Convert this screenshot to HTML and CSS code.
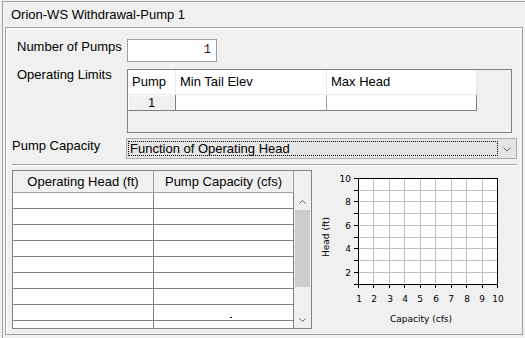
FILE: index.html
```html
<!DOCTYPE html>
<html>
<head>
<meta charset="utf-8">
<link rel="stylesheet" href="styles.css">
</head>
<body>
<div class="window">
  <div class="title">Orion-WS Withdrawal-Pump 1</div>
  <div class="panel">
    <div class="row row-num">
      <div class="lbl lbl-indent">Number of Pumps</div>
      <div class="numbox">1</div>
    </div>
    <div class="row row-limits">
      <div class="lbl lbl-indent">Operating Limits</div>
      <div class="limits">
        <div class="lg">
          <div class="lh">Pump</div>
          <div class="lh">Min Tail Elev</div>
          <div class="lh">Max Head</div>
          <div class="lr-head">1</div>
          <div class="lc"></div>
          <div class="lc lc-last"></div>
        </div>
      </div>
    </div>
    <div class="row row-cap">
      <div class="lbl lbl-cap">Pump Capacity</div>
      <div class="combo">
        <div class="combo-focus">Function of Operating Head</div>
        <svg class="combo-arrow" width="8" height="5" viewBox="0 0 8 5"><polyline points="0.5,0.5 4,4 7.5,0.5" fill="none" stroke="#606060" stroke-width="1"/></svg>
      </div>
    </div>
    <div class="sep"></div>
    <div class="lower">
      <div class="table">
        <div class="thead">
          <div class="th th1">Operating Head (ft)</div>
          <div class="th th2">Pump Capacity (cfs)</div>
          <div class="th-corner"></div>
        </div>
        <div class="tbody">
          <div class="rows">
            <div class="tr"><div class="td td1"></div><div class="td td2"></div></div>
            <div class="tr"><div class="td td1"></div><div class="td td2"></div></div>
            <div class="tr"><div class="td td1"></div><div class="td td2"></div></div>
            <div class="tr"><div class="td td1"></div><div class="td td2"></div></div>
            <div class="tr"><div class="td td1"></div><div class="td td2"></div></div>
            <div class="tr"><div class="td td1"></div><div class="td td2"></div></div>
            <div class="tr"><div class="td td1"></div><div class="td td2"></div></div>
            <div class="tr"><div class="td td1"></div><div class="td td2"><span class="dash"></span></div></div>
            <div class="tr"><div class="td td1"></div><div class="td td2"></div></div>
          </div>
          <div class="vscroll">
            <div class="sb-btn"><svg width="7" height="4" viewBox="0 0 7 4"><polyline points="0.5,3.5 3.5,0.5 6.5,3.5" fill="none" stroke="#606060" stroke-width="1"/></svg></div>
            <div class="sb-thumb"></div>
            <div class="sb-track"></div>
            <div class="sb-btn"><svg width="7" height="4" viewBox="0 0 7 4"><polyline points="0.5,0.5 3.5,3.5 6.5,0.5" fill="none" stroke="#606060" stroke-width="1"/></svg></div>
          </div>
        </div>
      </div>
      <svg class="chart" width="205" height="160" viewBox="0 0 205 160">
        <rect x="46" y="8" width="140" height="107" fill="#fff"/>
        <g stroke="#c0c0c0" stroke-width="1">
          <line x1="61.5" y1="8" x2="61.5" y2="114"/>
          <line x1="77.5" y1="8" x2="77.5" y2="114"/>
          <line x1="92.5" y1="8" x2="92.5" y2="114"/>
          <line x1="108.5" y1="8" x2="108.5" y2="114"/>
          <line x1="123.5" y1="8" x2="123.5" y2="114"/>
          <line x1="139.5" y1="8" x2="139.5" y2="114"/>
          <line x1="154.5" y1="8" x2="154.5" y2="114"/>
          <line x1="170.5" y1="8" x2="170.5" y2="114"/>
          <line x1="46" y1="20.5" x2="185" y2="20.5"/>
          <line x1="46" y1="31.5" x2="185" y2="31.5"/>
          <line x1="46" y1="43.5" x2="185" y2="43.5"/>
          <line x1="46" y1="55.5" x2="185" y2="55.5"/>
          <line x1="46" y1="67.5" x2="185" y2="67.5"/>
          <line x1="46" y1="78.5" x2="185" y2="78.5"/>
          <line x1="46" y1="90.5" x2="185" y2="90.5"/>
          <line x1="46" y1="102.5" x2="185" y2="102.5"/>
        </g>
        <rect x="46.5" y="8.5" width="139" height="106" fill="none" stroke="#000" stroke-width="1"/>
        <g stroke="#000" stroke-width="1">
          <line x1="42" y1="8.5" x2="46" y2="8.5"/>
          <line x1="42" y1="20.5" x2="46" y2="20.5"/>
          <line x1="42" y1="31.5" x2="46" y2="31.5"/>
          <line x1="42" y1="43.5" x2="46" y2="43.5"/>
          <line x1="42" y1="55.5" x2="46" y2="55.5"/>
          <line x1="42" y1="67.5" x2="46" y2="67.5"/>
          <line x1="42" y1="78.5" x2="46" y2="78.5"/>
          <line x1="42" y1="90.5" x2="46" y2="90.5"/>
          <line x1="42" y1="102.5" x2="46" y2="102.5"/>
          <line x1="42" y1="114.5" x2="46" y2="114.5"/>
          <line x1="46.5" y1="115" x2="46.5" y2="118"/>
          <line x1="61.5" y1="115" x2="61.5" y2="118"/>
          <line x1="77.5" y1="115" x2="77.5" y2="118"/>
          <line x1="92.5" y1="115" x2="92.5" y2="118"/>
          <line x1="108.5" y1="115" x2="108.5" y2="118"/>
          <line x1="123.5" y1="115" x2="123.5" y2="118"/>
          <line x1="139.5" y1="115" x2="139.5" y2="118"/>
          <line x1="154.5" y1="115" x2="154.5" y2="118"/>
          <line x1="170.5" y1="115" x2="170.5" y2="118"/>
          <line x1="185.5" y1="115" x2="185.5" y2="118"/>
        </g>
        <g class="ax" text-anchor="end">
          <text x="39" y="12">10</text>
          <text x="39" y="35">8</text>
          <text x="39" y="59">6</text>
          <text x="39" y="82">4</text>
          <text x="39" y="106">2</text>
        </g>
        <g class="ax" text-anchor="middle">
          <text x="47" y="132">1</text>
          <text x="62" y="132">2</text>
          <text x="78" y="132">3</text>
          <text x="93" y="132">4</text>
          <text x="108" y="132">5</text>
          <text x="124" y="132">6</text>
          <text x="139" y="132">7</text>
          <text x="155" y="132">8</text>
          <text x="170" y="132">9</text>
          <text x="186" y="132">10</text>
          <text x="109" y="152">Capacity (cfs)</text>
          <text x="0" y="0" transform="translate(17,67) rotate(-90)">Head (ft)</text>
        </g>
      </svg>
    </div>
  </div>
</div>
</body>
</html>
```
FILE: styles.css
```css
* { box-sizing: border-box; }
html, body { margin: 0; padding: 0; }
body {
  background: #f0f0f0;
  font-family: "Liberation Sans", Arial, sans-serif;
  font-size: 13px;
  color: #000;
  width: 525px;
  height: 338px;
  overflow: hidden;
}
.window {
  margin: 1px 0 0 2px;
  border-top: 1px solid #a0a0a0;
  border-left: 1px solid #a0a0a0;
  height: 337px;
}
.title {
  height: 25px;
  padding: 5px 0 0 8px;
  line-height: 15px;
}
.panel {
  margin-left: 2px;
  width: 518px;
  height: 308px;
  border: 1px solid #a0a0a0;
  box-shadow: inset 1px 1px #fff;
  padding: 11px 5px 0 6px;
}
.row { display: flex; align-items: flex-start; }
.lbl { line-height: 15px; flex: none; }
.lbl-indent { width: 115px; padding-left: 5px; }
.lbl-cap { width: 114px; }
.numbox {
  width: 90px;
  height: 23px;
  border: 1px solid #a0a0a0;
  background: #fff;
  text-align: right;
  padding-right: 5px;
  font-family: "Liberation Mono", "Courier New", monospace;
  font-size: 12px;
  line-height: 21px;
  color: #222;
}
.row-limits { margin-top: 5px; }
.limits {
  margin-top: 2px;
  width: 385px;
  height: 64px;
  border: 1px solid #828282;
  background: #f0f0f0;
}
.lg {
  display: grid;
  grid-template-columns: 48px 151px 150px;
  grid-template-rows: 25px 16px;
}
.lh {
  background: #fff;
  border-right: 1px solid #ebebeb;
  border-bottom: 1px solid #ebebeb;
  padding: 4px 0 0 4px;
  line-height: 15px;
}
.lr-head {
  background: #f0f0f0;
  border-right: 1px solid #808080;
  border-bottom: 1px solid #808080;
  box-shadow: inset 1px 1px #fff;
  text-align: center;
  line-height: 13px;
  padding-top: 1px;
}
.lc {
  background: #fff;
  border-right: 1px solid #a0a0a0;
  border-bottom: 1px solid #808080;
}
.lc-last { border-right-color: #808080; }
.row-cap { margin-top: 5px; }
.combo {
  flex: 1;
  height: 21px;
  border: 1px solid #adadad;
  background: #e5e5e5;
  display: flex;
  align-items: flex-start;
  padding: 2px 0 0 1px;
}
.combo-focus {
  width: 370px;
  height: 15px;
  border: 1px dotted #000;
  line-height: 13px;
  padding-left: 1px;
  white-space: nowrap;
}
.combo-arrow { display: block; margin: 6px 0 0 5px; }
.sep {
  margin-top: 5px;
  height: 2px;
  border-top: 1px solid #a0a0a0;
  border-bottom: 1px solid #fff;
}
.lower { display: flex; align-items: flex-start; margin-top: 4px; }
.table {
  flex: none;
  width: 300px;
  height: 159px;
  border: 1px solid #828282;
  background: #f0f0f0;
  overflow: hidden;
}
.thead { display: flex; height: 22px; }
.th {
  background: #f0f0f0;
  border-right: 1px solid #a0a0a0;
  border-bottom: 1px solid #a0a0a0;
  text-align: center;
  line-height: 15px;
  padding-top: 3px;
  white-space: nowrap;
}
.th1 { width: 141px; }
.th2 { width: 140px; }
.th-corner { width: 17px; }
.tbody { display: flex; height: 135px; }
.rows { width: 281px; height: 135px; overflow: hidden; flex: none; }
.tr { display: flex; height: 16px; border-bottom: 1px solid #808080; }
.td { background: #fff; height: 15px; border-right: 1px solid #808080; }
.td1 { width: 141px; }
.td2 { width: 140px; }
.dash { display: block; width: 2px; height: 1px; background: #000; margin: 12px 0 0 76px; }
.vscroll {
  width: 17px;
  height: 135px;
  background: #f0f0f0;
  display: flex;
  flex-direction: column;
  align-items: center;
}
.sb-btn {
  width: 17px;
  height: 17px;
  display: flex;
  align-items: center;
  justify-content: center;
}
.sb-btn svg { display: block; }
.sb-thumb { width: 15px; height: 77px; background: #cdcdcd; }
.sb-track { flex: 1; }
.chart { display: block; flex: none; }
.ax { font-family: "DejaVu Sans", sans-serif; font-size: 9px; fill: #000; }
```
